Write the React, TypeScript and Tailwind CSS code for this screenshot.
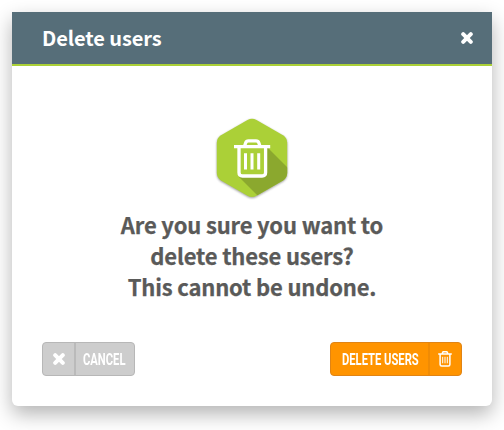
function CloseGlyph({ className }: { className: string }) {
  return (
    <svg viewBox="0 0 12 12" className={className} stroke="currentColor" strokeWidth="4" strokeLinecap="round" fill="none">
      <path d="M2.2 2.2 9.8 9.8M9.8 2.2 2.2 9.8" />
    </svg>
  );
}

function HexTrash() {
  return (
    <svg viewBox="0 0 80 90" className="h-[90px] w-20 shrink-0">
      <defs>
        <clipPath id="hex">
          <path d="M35.5 6.1Q40 3.6 44.5 6.1L71 21.2Q75.2 23.8 75.2 28.8V58.8Q75.2 63.8 71 66.4L44.5 81.7Q40 84.2 35.5 81.7L9 66.4Q4.8 63.8 4.8 58.8V28.8Q4.8 23.8 9 21.2Z" />
        </clipPath>
        <filter id="soft" x="-10%" y="-10%" width="120%" height="120%">
          <feGaussianBlur stdDeviation="0.8" />
        </filter>
      </defs>
      <path d="M35.5 6.1Q40 3.6 44.5 6.1L71 21.2Q75.2 23.8 75.2 28.8V58.8Q75.2 63.8 71 66.4L44.5 81.7Q40 84.2 35.5 81.7L9 66.4Q4.8 63.8 4.8 58.8V28.8Q4.8 23.8 9 21.2Z" transform="translate(0 1)" fill="#666" opacity=".65" filter="url(#soft)" />
      <g clipPath="url(#hex)">
        <path d="M0 0H80V90H0Z" fill="#abd037" />
        <path d="M55 33 80 58V90H54L27 63Z" fill="#8ba82e" />
      </g>
      <path d="M27 33V59.5Q27 62 29.8 62H51Q53.6 62 53.6 59.5V33Z" fill="#abd037" />
      <g fill="none" stroke="#fff" strokeWidth="3.3">
        <path d="M22 32.6H58.2" />
        <path d="M27 33V58.5Q27 62 30.5 62H50.1Q53.6 62 53.6 58.5V33" />
        <path d="M32.6 32 33.6 29Q34.3 26.9 36.5 26.9H44Q46.2 26.9 46.9 29L47.9 32" />
        <path d="M33.5 39.2V55.4M40 39.2V55.4M46.7 39.2V55.4" strokeWidth="3" />
      </g>
    </svg>
  );
}

function SmallTrash() {
  return (
    <svg viewBox="0 0 14 16" className="h-4 w-3.5" fill="none" stroke="#fff" strokeWidth="1.5">
      <path d="M.2 3.1H13.8M2.1 3.2V13.4Q2.1 14.9 3.6 14.9H10.4Q11.9 14.9 11.9 13.4V3.2M4.1 3 4.7 1.4Q5 .7 5.7.7H8.3Q9 .7 9.3 1.4L9.9 3" />
      <path d="M4.7 5.8V12.3M7 5.8V12.3M9.3 5.8V12.3" strokeWidth="1" />
    </svg>
  );
}

export default function App() {
  return (
    <main className="h-[430px] w-[504px] overflow-hidden bg-white p-3 font-['Noto_Sans_CJK_SC',sans-serif]">
      <section className="flex h-[394px] w-[480px] flex-col rounded-b-md bg-white shadow-[0_8px_20px_rgba(0,0,0,0.3)]">
        <header className="flex h-[54px] items-center justify-between border-b-2 border-[#abd037] bg-[#566e79] pr-[19px] pl-[30px] text-white">
          <h1 className="text-[20px] leading-[30px] font-bold tracking-[-0.08px]">Delete users</h1>
          <button aria-label="Close">
            <CloseGlyph className="size-3" />
          </button>
        </header>
        <div className="flex flex-col items-center pt-[48px]">
          <HexTrash />
          <p className="mt-[5px] text-center text-[22px] leading-[31px] font-bold tracking-[-0.17px] whitespace-nowrap text-[#5a5a59] [-webkit-text-stroke:0.25px_#5a5a59]">
            Are you sure you want to
            <br />
            delete these users?
            <br />
            This cannot be undone.
          </p>
        </div>
        <footer className="mt-auto mb-[30px] flex justify-between px-[30px] font-['Roboto',sans-serif] text-[16px] font-bold text-white">
          <button className="flex h-[34px] w-[93px] rounded-[4px] border border-[#b7b7b7] bg-[#cdcdcd]">
            <span className="flex h-full w-[33px] items-center justify-center border-r-2 border-[#bababa]">
              <CloseGlyph className="size-3" />
            </span>
            <span className="flex h-full flex-1 items-center pl-[7px]">
              <span className="w-[42px]">
                <span className="block origin-left scale-x-[0.7] pt-px text-left leading-8 whitespace-nowrap">CANCEL</span>
              </span>
            </span>
          </button>
          <button className="flex h-[34px] w-[132px] rounded-[4px] border border-[#e08415] bg-[#ff9400]">
            <span className="flex h-full w-[99px] items-center border-r-2 border-[#f08b04] pl-[11px]">
              <span className="w-[77px]">
                <span className="block origin-left scale-x-[0.7] pt-px text-left leading-8 whitespace-nowrap">DELETE USERS</span>
              </span>
            </span>
            <span className="flex h-full flex-1 items-center justify-center pr-px">
              <SmallTrash />
            </span>
          </button>
        </footer>
      </section>
    </main>
  );
}
